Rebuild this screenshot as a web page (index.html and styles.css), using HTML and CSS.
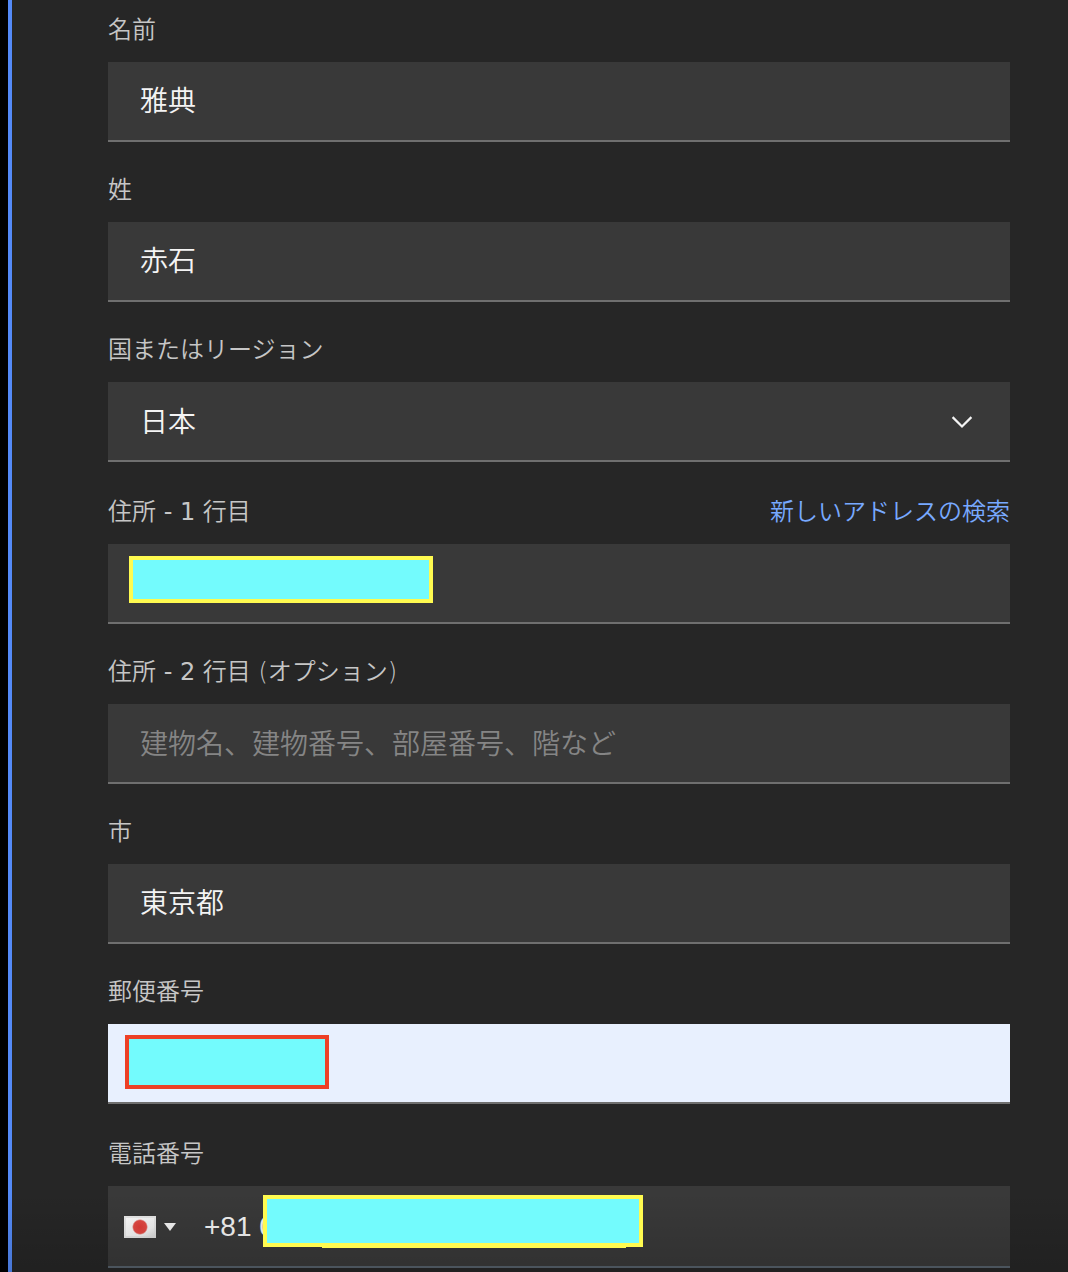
FILE: index.html
```html
<!DOCTYPE html>
<html lang="ja">
<head>
<meta charset="utf-8">
<meta name="viewport" content="width=device-width, initial-scale=1">
<title>アカウント情報</title>
<link rel="stylesheet" href="styles.css">
</head>
<body>
<main class="panel">
  <form class="form">
    <div class="field">
      <div class="field-head"><label for="first-name">名前</label></div>
      <input class="control" id="first-name" type="text" value="雅典">
    </div>
    <div class="field">
      <div class="field-head"><label for="last-name">姓</label></div>
      <input class="control" id="last-name" type="text" value="赤石">
    </div>
    <div class="field field-spaced">
      <div class="field-head"><label for="country">国またはリージョン</label></div>
      <div class="control-wrap">
        <select class="control control-select" id="country"><option>日本</option></select>
        <svg class="chevron" viewBox="0 0 32 32" aria-hidden="true"><path d="M6.600 11.100L16 20.500L25.400 11.100" fill="none" stroke="currentColor" stroke-width="2.200"/></svg>
      </div>
    </div>
    <div class="field">
      <div class="field-head"><label for="address1">住所<span class="latin"> - 1 </span>行目</label><a class="link" href="#">新しいアドレスの検索</a></div>
      <div class="control-wrap">
        <input class="control" id="address1" type="text">
        <span class="mask mask-address"></span>
      </div>
    </div>
    <div class="field">
      <div class="field-head"><label for="address2">住所<span class="latin"> - 2 </span>行目 (オプション)</label></div>
      <input class="control" id="address2" type="text" placeholder="建物名、建物番号、部屋番号、階など">
    </div>
    <div class="field">
      <div class="field-head"><label for="city">市</label></div>
      <input class="control" id="city" type="text" value="東京都">
    </div>
    <div class="field field-spaced">
      <div class="field-head"><label for="postal">郵便番号</label></div>
      <div class="control-wrap">
        <input class="control control-filled" id="postal" type="text">
        <span class="mask mask-postal"></span>
      </div>
    </div>
    <div class="field">
      <div class="field-head"><label for="phone">電話番号</label></div>
      <div class="control-wrap phone">
        <button class="flag-button" type="button" aria-label="日本 +81">
          <svg class="flag" viewBox="0 0 32 22" aria-hidden="true">
            <defs>
              <linearGradient id="cloth" x1="0" y1="0" x2="1" y2="1"><stop offset="0" stop-color="#fff"/><stop offset=".7" stop-color="#f2f2f2"/><stop offset="1" stop-color="#d4d4d4"/></linearGradient>
              <radialGradient id="sun"><stop offset="0" stop-color="#e03c38"/><stop offset=".8" stop-color="#e24a44"/><stop offset="1" stop-color="#e24a44" stop-opacity="0"/></radialGradient>
            </defs>
            <rect width="32" height="22" fill="url(#cloth)"/>
            <path d="M1 1H31V21H1Z" fill="none" stroke="#ddd" stroke-width="2" opacity=".6"/>
            <circle cx="16" cy="11" r="8" fill="url(#sun)"/>
          </svg>
          <svg class="caret" viewBox="0 0 12 8" aria-hidden="true"><path d="M0 0H12L6 8Z" fill="currentColor"/></svg>
        </button>
        <input class="phone-input" id="phone" type="tel" value="+81 0">
        <span class="mask mask-phone"></span>
      </div>
    </div>
  </form>
</main>
</body>
</html>
```
FILE: styles.css
```css
* { box-sizing: border-box; }

body {
  margin: 0;
  background: #262626;
  color: #f4f4f4;
  font-family: "Noto Sans CJK JP", sans-serif;
  font-weight: 350;
}

.panel {
  position: relative;
  margin-left: 8px;
  border-left: 4px solid #548af7;
  box-shadow: -8px 0 #000;
  padding: 14px 58px 4px 96px;
}

/* Shade that fades in over the lower edge of the panel */
.panel::after {
  content: "";
  position: absolute;
  inset: auto 0 0 -4px;
  height: 80px;
  background: linear-gradient(transparent, rgba(0, 0, 0, 0.14));
  pointer-events: none;
}

.form {
  display: flex;
  flex-direction: column;
  gap: 32px;
}

.field-spaced { margin-bottom: 2px; }

.field-head {
  display: flex;
  justify-content: space-between;
  margin-bottom: 16px;
  color: #c6c6c6;
  font-family: "DejaVu Sans", "Noto Sans CJK JP", sans-serif;
  font-size: 24px;
  line-height: 32px;
}

.latin { font-weight: 400; }

.link {
  color: #78a9ff;
  text-decoration: none;
}

.control-wrap { position: relative; }

.control {
  display: block;
  width: 100%;
  height: 80px;
  padding: 0 32px 4px;
  border: 0;
  border-bottom: 2px solid #6f6f6f;
  border-radius: 0;
  outline: 0;
  appearance: none;
  background: #393939;
  color: #f4f4f4;
  font: inherit;
  font-size: 28px;
}

.control-select,
.control:placeholder-shown { padding-bottom: 2px; }

.control::placeholder {
  color: #858585;
  opacity: 1;
}

.control-filled { background: #e8f0fe; }

.chevron {
  position: absolute;
  top: 24px;
  right: 32px;
  width: 32px;
  height: 32px;
  pointer-events: none;
}

.phone {
  display: flex;
  height: 82px;
  border-bottom: 2px solid #56616b;
  background: #393939;
}

.flag-button {
  display: flex;
  align-items: center;
  gap: 8px;
  padding: 2px 16px 0;
  border: 0;
  background: none;
  color: #f4f4f4;
}

.flag {
  width: 32px;
  height: 22px;
}

.caret {
  width: 12px;
  height: 8px;
}

.phone-input {
  flex: 1;
  min-width: 0;
  padding: 2px 12px 0;
  border: 0;
  outline: 0;
  background: none;
  color: #f4f4f4;
  font-family: "Liberation Sans", sans-serif;
  font-size: 28px;
}

/* Blocks that hide private values */
.mask {
  position: absolute;
  border: 4px solid #fffb50;
  background: #73fbfd;
}

.mask-address {
  top: 12px;
  left: 21px;
  width: 304px;
  height: 47px;
}

.mask-postal {
  top: 11px;
  left: 17px;
  width: 204px;
  height: 54px;
  border-color: #ed4026;
}

.mask-phone {
  z-index: 1;
  top: 9px;
  left: 155px;
  width: 380px;
  height: 52px;
}

.mask-phone::after {
  content: "";
  position: absolute;
  right: 13px;
  bottom: -5px;
  width: 304px;
  height: 2px;
  background: #fffb50;
}
```
